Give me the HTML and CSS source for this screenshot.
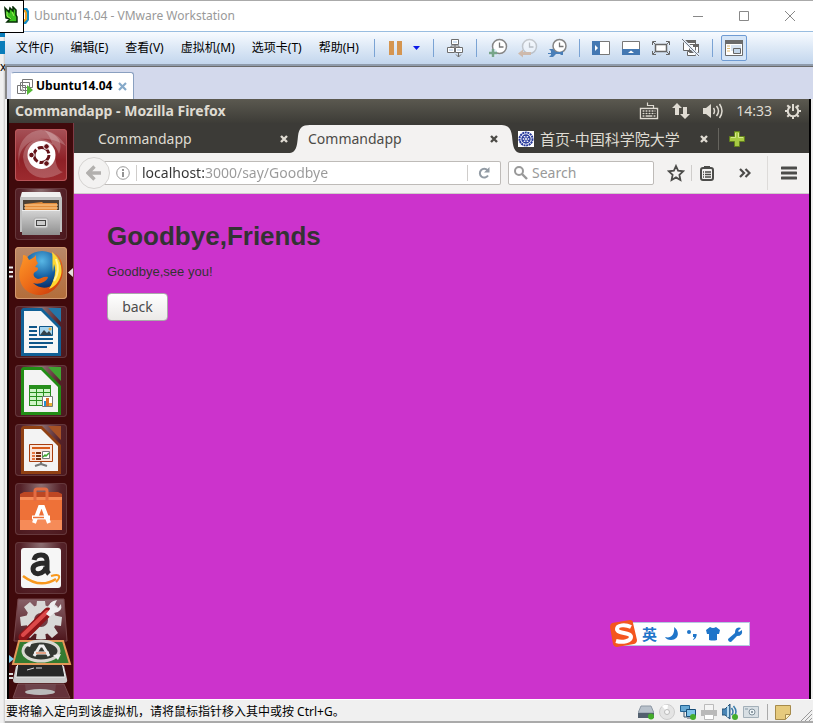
FILE: index.html
```html
<!DOCTYPE html>
<html lang="zh-CN">
<head>
<meta charset="utf-8">
<title>Ubuntu14.04 - VMware Workstation</title>
<link rel="stylesheet" href="styles.css">
</head>
<body>
<aside class="backdrop" aria-hidden="true">
  <div class="backdrop-blue"></div><div class="backdrop-blue tall"></div><span class="backdrop-mark">x</span>
</aside>
<div class="badge">
  <svg width="14" height="18" viewBox="0 0 14 18"><path d="M1 2l4 4 1-4 3 3V1l3 3v5l1 2v5H3l3-3-4-1z" fill="#39c21e" stroke="#062c06" stroke-width="1.500"/><path d="M3 6v4l4 3M8 6l2 4" stroke="#a4f35c" fill="none"/></svg>
</div>
<div class="window">
  <header class="titlebar">
    <svg class="app-icon" width="7" height="18" viewBox="0 0 7 18"><path d="M0 1h4l2 3v9l-3 4H0z" fill="#178cc0"/><path d="M0 4h2l1 2v6l-2 2H0z" fill="#fff" stroke="#f0a21d" stroke-width="2"/></svg>
    <span class="window-title">Ubuntu14.04 - VMware Workstation</span>
    <button class="caption" aria-label="最小化"><svg width="12" height="12"><path d="M1 6.500h10" stroke="#888"/></svg></button>
    <button class="caption" aria-label="最大化"><svg width="12" height="12"><path d="M1.500 1.500h9v9h-9z" fill="none" stroke="#888"/></svg></button>
    <button class="caption" aria-label="关闭"><svg width="12" height="12"><path d="M1 1l10 10M11 1L1 11" stroke="#888"/></svg></button>
  </header>

  <div class="menubar">
    <nav class="menus">
      <button>文件(F)</button><button>编辑(E)</button><button>查看(V)</button><button>虚拟机(M)</button><button>选项卡(T)</button><button>帮助(H)</button>
    </nav>
    <i class="sep"></i>
    <button class="pause" aria-label="挂起"><svg width="14" height="14"><path d="M0 0h5v14H0zM8 0h5v14H8z" fill="#d59550"/></svg></button>
    <button class="drop" aria-label="电源选项"><svg width="7" height="4"><path d="M0 0h7L3.500 4z" fill="#0a18e8"/></svg></button>
    <i class="sep"></i>
    <button class="tool narrow" aria-label="Ctrl+Alt+Del"><svg width="18" height="20" viewBox="0 0 18 20"><g fill="#fff" stroke="#6e6e6e"><path d="M5.500 1.500h7v5h-7zM1.500 9.500h7v5h-7zM9.500 9.500h7v5h-7zM9 6.500v3M5 9.500V8h8v1.500"/><path d="M12.500 15v4M10 16.500l2.500 2.500 2.500-2.500" fill="none"/></g><path d="M7 3.500h4v1H7zM3 11.500h4v1H3zM11 11.500h4v1h-4z" fill="#a9c8e8"/></svg></button>
    <i class="sep"></i>
    <div class="tools">
      <button class="tool" aria-label="拍摄快照"><svg width="20" height="20" viewBox="0 0 20 20"><circle cx="11.500" cy="8.500" r="7" fill="#fff" stroke="#858585" stroke-width="1.500"/><path d="M11.500 4.500v4.500h4" fill="none" stroke="#777" stroke-width="1.300"/><path d="M5 11v8M1 15h8" stroke="#dce9f7" stroke-width="5"/><path d="M5 11v8M1 15h8" stroke="#77a58a" stroke-width="2.500"/></svg></button>
      <button class="tool faded" aria-label="恢复快照"><svg width="20" height="20" viewBox="0 0 20 20"><circle cx="11.500" cy="8.500" r="7" fill="#fff" stroke="#999" stroke-width="1.500"/><path d="M11.500 4.500v4.500h4" fill="none" stroke="#888" stroke-width="1.300"/><path d="M0 15.500l5-4v2.500h8v3H5v2.500z" fill="#c98a58"/></svg></button>
      <button class="tool" aria-label="管理快照"><svg width="20" height="20" viewBox="0 0 20 20"><circle cx="11.500" cy="8" r="6.500" fill="#fff" stroke="#858585" stroke-width="1.500"/><path d="M11.500 4.500v4h4" fill="none" stroke="#777" stroke-width="1.300"/><path d="M1 11h4l3 3h5l2-1v4l-2 0-1-1H8l-3 3H1l2-2v-1H0v-1h3v-2z" fill="#4a7fb8"/></svg></button>
    </div>
    <i class="sep"></i>
    <div class="tools">
      <button class="tool" aria-label="显示库"><svg width="20" height="20" viewBox="0 0 20 20"><path d="M1.500 3.500h17v13h-17z" fill="#fff" stroke="#777"/><path d="M1 3h8v14H1z" fill="#4478b2"/><path d="M4 7l3 3-3 3z" fill="#fff"/></svg></button>
      <button class="tool" aria-label="显示缩略图"><svg width="20" height="20" viewBox="0 0 20 20"><path d="M1.500 3.500h17v13h-17z" fill="#fff" stroke="#777"/><path d="M1 11h18v6H1z" fill="#4478b2"/><path d="M7 15l3-2.500 3 2.500z" fill="#fff"/></svg></button>
      <button class="tool" aria-label="全屏"><svg width="20" height="20" viewBox="0 0 20 20"><path d="M4.500 6.500h11v7h-11z" fill="#fff" stroke="#666" stroke-width="1.500"/><path d="M1.500 7V3.500H5M15 3.500h3.500V7M18.500 13v3.500H15M5 16.500H1.500V13M2 4l2.500 2.500M18 4l-2.500 2.500M18 16l-2.500-2.500M2 16l2.500-2.500" fill="none" stroke="#666"/></svg></button>
      <button class="tool" aria-label="Unity"><svg width="20" height="20" viewBox="0 0 20 20"><g fill="#fff" stroke="#666"><path d="M8.500 6.500h9v8h-9zM2.500 2.500h12v10h-12zM6.500 13.500h8v4h-8z"/></g><path d="M2 2h13v3H2zM12 6h6v3h-6z" fill="#666"/><path d="M1 1l17 17" stroke="#e7effa" stroke-width="3"/><path d="M1 1l17 17" stroke="#707780"/></svg></button>
    </div>
    <i class="sep"></i>
    <button class="tool pressed" aria-label="控制台视图"><svg width="20" height="18" viewBox="0 0 20 18"><path d="M1.500 1.500h17v15h-17z" fill="#fff" stroke="#6b6b6b"/><path d="M1 1h18v4H1z" fill="#6b6b6b"/><path d="M3 7h3M3 9.500h3M3 12h3" stroke="#e2bc72"/><path d="M7 6h10v6H7z" fill="#d7e3f1"/><path d="M9.500 9.500h7v5h-7z" fill="#c3d6ea" stroke="#666"/></svg></button>
  </div>

  <div class="vm-tabs">
    <div class="vm-tab">
      <svg width="16" height="17" viewBox="0 0 16 17"><g fill="#fff" stroke="#777"><path d="M5.500 1.500h10v8h-10zM3.500 4.500h9v8h-9zM.5 7.500h8v8h-8z"/></g><path d="M4 11.500h3M5.500 10v4" stroke="#bbb"/><path d="M10 7l6 5-6 5z" fill="#55b736"/></svg>
      <span>Ubuntu14.04</span>
      <button aria-label="关闭选项卡"><svg width="9" height="9"><path d="M1 1l7 7M8 1L1 8" stroke="#86a9c9" stroke-width="2.200"/></svg></button>
    </div>
  </div>

  <main class="guest">
    <div class="panel">
      <strong>Commandapp - Mozilla Firefox</strong>
      <div class="indicators">
        <svg width="20" height="20" viewBox="0 0 20 20"><path d="M1.500 7.500h17v10h-17z" fill="#2f2e29" stroke="#dfdbd2" stroke-width="1.400"/><path d="M3.500 10h13M3.500 12.500h13" stroke="#dfdbd2" stroke-dasharray="2 1" stroke-width="1.500"/><path d="M3.500 15h2m1 0h7m1 0h2" stroke="#dfdbd2" stroke-width="1.500"/><path d="M14.500 7V4.500h-6V1.500" fill="none" stroke="#dfdbd2" stroke-width="1.200"/></svg>
        <svg width="18" height="18" viewBox="0 0 18 18"><path d="M5 1l5 5H7v7H3V6H0zM13 17l-5-5h3V5h4v7h3z" fill="#dfdbd2"/></svg>
        <svg width="20" height="16" viewBox="0 0 20 16"><path d="M0 5h3l5-4v14l-5-4H0z" fill="#dfdbd2"/><path d="M10.500 5q2 3 0 6M13.500 3q4 5 0 10M16.500 1q5 7 0 14" fill="none" stroke="#dfdbd2" stroke-width="1.500"/></svg>
        <time>14:33</time>
        <svg width="16" height="16" viewBox="0 0 16 16"><path d="M5.500 3.500a5.200 5.200 0 1 0 5 0" fill="none" stroke="#dfdbd2" stroke-width="2"/><path d="M8 1v7M0 8h3M13 8h3M2.300 2.300l2 2M13.700 2.300l-2 2M2.300 13.700l2-2M13.700 13.700l-2-2M8 13v3" stroke="#dfdbd2" stroke-width="2"/></svg>
      </div>
    </div>
    <div class="desktop">
      <nav class="launcher">
        <div class="tiles">
          <button class="tile dash" aria-label="Dash"><svg viewBox="0 0 52 52"><path d="M5 39C-1 15 25 0 51 17 45 7 37 2 26 1 10 2-1 18 5 39z" fill="#fff" opacity=".2"/><path d="M8 28C10 5 38 5 44 25 50 8 37 4 29 1 44 14 36 40 48 43 28 55 10 48 8 28z" fill="#fff" opacity=".22"/><circle cx="26.500" cy="26" r="14" fill="#fff"/><circle cx="26.500" cy="26" r="7.500" fill="none" stroke="#641217" stroke-width="3" stroke-dasharray="13.700 2"/><g fill="#641217" stroke="#fff"><circle cx="16.500" cy="26" r="2.800"/><circle cx="31.500" cy="17.500" r="2.800"/><circle cx="31.500" cy="34.500" r="2.800"/></g></svg></button>
          <button class="tile" aria-label="文件"><svg viewBox="0 0 52 52"><defs><linearGradient id="steel" x1="0" y1="0" x2="0" y2="1"><stop stop-color="#d4d4d4"/><stop offset="1" stop-color="#8f8f8f"/></linearGradient></defs><path d="M7 4h38l2 6v34H5V10z" fill="#c1c1c1"/><path d="M7 4h38l1 5H6z" fill="#f0f0f0"/><path d="M8 12h36v11H8z" fill="#4b4035"/><path d="M10 16l17-2 1 1h14v8H10z" fill="#e28c3b"/><path d="M9 17h34M9 20h34" stroke="#ffd198"/><path d="M7 22h38v25H7z" fill="url(#steel)"/><path d="M7 22.500h38" stroke="#eee"/><rect x="19" y="30" width="14" height="10" rx="2" fill="#ddd" stroke="#aaa"/><rect x="21.500" y="32.500" width="9" height="5" fill="#ccc" stroke="#444"/></svg></button>
          <button class="tile firefox" aria-label="Firefox"><svg viewBox="0 0 52 52"><defs><radialGradient id="globe" cx=".5" cy=".25" r=".7"><stop stop-color="#58b7e5"/><stop offset=".6" stop-color="#145c9f"/><stop offset="1" stop-color="#0a2a62"/></radialGradient><linearGradient id="fox" x1="0" y1="0" x2="1" y2="1"><stop stop-color="#ff9b29"/><stop offset=".5" stop-color="#ec6a18"/><stop offset="1" stop-color="#c43108"/></linearGradient></defs><circle cx="27" cy="24" r="20" fill="url(#globe)"/><path d="M8 8c3 0 5 2 6 5 4-2 6-3 7-5 0 4 0 6 2 8l-3 4c4 0 4 3 0 5-3 2-1 6 3 7 4 0 5-3 10-2-1 5-9 8-15 6 9 9 24 4 27-7 4-10-1-19-6-24 9 6 10 17 8 25-3 10-11 17-21 18C10 48 2 36 5 22c1-4 3-6 3-14z" fill="url(#fox)"/><path d="M37 5c8 6 12 17 8 26-2 5-6 9-11 11 5-8 8-17 5-25l-1 8c-1-8 0-14-1-20z" fill="#ffd72f"/><path d="M41 12c3 8 2 16-2 22" stroke="#fff29b" stroke-width="2" fill="none"/></svg></button>
          <button class="tile" aria-label="Writer"><svg viewBox="0 0 52 52"><path d="M8 2h19l19 19v29H6V4z" fill="#116096"/><path d="M9 5h17l17 17v25H9z" fill="#f6f6f6"/><path d="M33 2h13v14z" fill="#2476a8"/><path d="M14 21h8M14 25h8M14 29h8M14 33h24M14 37h24M14 41h18" stroke="#0f5689" stroke-width="2"/><path d="M24.500 20.500h13v9h-13z" fill="#a8d5ee" stroke="#0f5689"/><path d="M25 29l4-5 3 3 2-2 3 4z" fill="#34434b"/><circle cx="35" cy="23" r="1.500" fill="#eda93b"/></svg></button>
          <button class="tile" aria-label="Calc"><svg viewBox="0 0 52 52"><path d="M8 2h19l19 19v29H6V4z" fill="#228d15"/><path d="M9 5h17l17 17v25H9z" fill="#f3f3f3"/><path d="M33 2h13v14z" fill="#41a432"/><path d="M14 20h22v21H14z" fill="#278f1c"/><path d="M15 24h6v3h-6zm7 0h6v3h-6zm7 0h6v3h-6zM15 28h6v3h-6zm7 0h6v3h-6zm7 0h6v3h-6zM15 32h6v3h-6zm7 0h6v3h-6zM15 36h6v4h-6zm7 0h5v4h-5z" fill="#cef5c6"/><path d="M27.500 31.500h10v10h-10z" fill="#fff" stroke="#777"/><path d="M29 36h2v5h-2z" fill="#2391d3"/><path d="M31 33h3v8h-3z" fill="#d77024"/><path d="M34 38h3v3h-3z" fill="#e8b335"/></svg></button>
          <button class="tile" aria-label="Impress"><svg viewBox="0 0 52 52"><path d="M8 2h19l19 19v29H6V4z" fill="#904013"/><path d="M9 5h17l17 17v25H9z" fill="#f3f3f3"/><path d="M33 2h13v14z" fill="#a65226"/><path d="M14.500 20.500h23v17h-23z" fill="#fae5da" stroke="#a83d0d"/><path d="M17 24h18" stroke="#d65a1b" stroke-width="2"/><path d="M17 29h3M17 32h3M17 35h3" stroke="#e37540" stroke-width="2"/><path d="M21 29h5M21 32h5M21 35h5" stroke="#7b2e0e" stroke-width="2"/><path d="M27.500 27.500h7v7h-7z" fill="#fff" stroke="#777"/><path d="M28 33l2-2 1 1 3-3" stroke="#38a62c" stroke-width="1.500" fill="none"/><path d="M26 38v2l-6 2M26 40l6 2" stroke="#777" stroke-width="2" fill="none"/></svg></button>
          <button class="tile" aria-label="软件中心"><svg viewBox="0 0 52 52"><path d="M5 11h42v36H5z" fill="#ee7138"/><path d="M5 11l4-2h34l4 2v3H5z" fill="#bd4723"/><path d="M5 14h42v3H5zM5 37h42v10H5z" fill="#f68b58"/><path d="M20 18V8q0-2 2-2h8q2 0 2 2v10" fill="none" stroke="#e46c43" stroke-width="3"/><path d="M19 40l6-16h3l6 16" fill="none" stroke="#fff" stroke-width="4"/><path d="M17 34.500h18" stroke="#fff" stroke-width="4"/><path d="M18 34.500h11" stroke="#ee7138" stroke-width="1.500"/></svg></button>
          <button class="tile" aria-label="Amazon"><svg viewBox="0 0 52 52"><rect x="6" y="6" width="40" height="40" rx="3" fill="#f6f6f6"/><path d="M19 18q1-5 7-5 6 0 6 6v9q0 2 2 4M31 21c-9 0-13 2-13 6 0 7 11 6 13-2" fill="none" stroke="#292929" stroke-width="5"/><path d="M8 34q17 13 33 3" fill="none" stroke="#f8981d" stroke-width="2.500"/><path d="M36 34q7-2 8 0t-3 6" fill="none" stroke="#f8981d" stroke-width="2"/></svg></button>
        </div>
        <svg class="stack" width="64" height="105" viewBox="0 0 64 105"><defs><linearGradient id="shine" x1="0" y1="0" x2="0" y2="1"><stop stop-color="#886168"/><stop offset="1" stop-color="#4d151b"/></linearGradient></defs><path d="M9 5h46l3 42H5z" fill="url(#shine)" stroke="#754449"/><g fill="#d9d9d7"><circle cx="32" cy="26" r="15"/><path d="M28 7h8l1 8H27zM28 37h8l1 8H27zM11 23l9-2v10l-8 1zM53 23l-9-2v10l8 1zM15 13l6-5 7 7-7 7zM49 13l-6-5-7 7 7 7zM15 39l6 5 7-7-7-7zM49 39l-6 5-7-7 7-7z"/></g><circle cx="32" cy="26" r="7" fill="#713d43"/><path d="M14 43l25-25" stroke="#8f1418" stroke-width="9" stroke-linecap="round"/><path d="M14 41l24-23" stroke="#dc4949" stroke-width="4" stroke-linecap="round"/><path d="M37 20l4-5q-3-7 7-9l-3 6 4 2 3-4q2 8-7 9l-4 4z" fill="#eee"/><path d="M7 72l-3 14q0 3 3 3h48q4 0 3-4l-3-13z" fill="#c9c9c9"/><path d="M9 68l-2 15h49l-3-15z" fill="#272727" stroke="#eee"/><path d="M18 76l7-2M27 74h6" stroke="#ddd"/><path d="M9 90l-5 14h57l-6-14z" fill="#65323a" stroke="#7b4c50"/><path d="M16 90l1 9h29l1-9" fill="#755059" opacity=".6"/><ellipse cx="31" cy="98" rx="15" ry="3" fill="#bbb"/><path d="M10 47h44l7 23H4z" fill="#347b31" stroke="#e39858" stroke-width="2"/><ellipse cx="32" cy="57" rx="18" ry="10" fill="#343832" stroke="#d8d8d0" stroke-width="3"/><path d="M25 62l6-10h3l6 10" fill="none" stroke="#eee" stroke-width="3"/><path d="M25 59h15" stroke="#eee" stroke-width="3"/><path d="M27 59h10" stroke="#dc5b23"/><path d="M14 51l9-3-2 5zM44 61l8-1-3 6z" fill="#eee"/><path d="M0 61l5 4-5 4z" fill="#83ccec"/><path d="M0 80h4M0 84h4" stroke="#ddd" stroke-width="2"/></svg>
        <svg class="running" width="64" height="14" viewBox="0 0 64 14"><path d="M0 2.500h4M0 7h4M0 11.500h4" stroke="#eee" stroke-width="2"/><path d="M64 3v9l-5-4.500z" fill="#e5dedd"/></svg>
      </nav>

      <section class="browser">
        <div class="tabs">
          <div class="tab"><span>Commandapp</span><button aria-label="关闭"><svg width="8" height="8"><path d="M1 1l6 6M7 1L1 7" stroke="#dfdbd2" stroke-width="2.400"/></svg></button></div>
          <div class="tab active">
            <svg class="foot left" width="20" height="28" viewBox="0 0 20 28"><path d="M20 0C12 0 9 3 8 11 7 22 6 27 0 28h20z" fill="#f3f2f1"/></svg>
            <svg class="foot right" width="20" height="28" viewBox="0 0 20 28"><path d="M0 0C8 0 11 3 12 11 13 22 14 27 20 28H0z" fill="#f3f2f1"/></svg>
            <span>Commandapp</span><button aria-label="关闭"><svg width="8" height="8"><path d="M1 1l6 6M7 1L1 7" stroke="#4c4b47" stroke-width="2.400"/></svg></button></div>
          <div class="tab"><svg class="favicon" width="16" height="16" viewBox="0 0 16 16"><path d="M0 0h16v16H0z" fill="#fff"/><circle cx="8" cy="8" r="6.500" fill="none" stroke="#26389b" stroke-width="2" stroke-dasharray="2 .6"/><circle cx="8" cy="8" r="4" fill="none" stroke="#26389b" stroke-width="1.500"/><path d="M8 4v8M4.500 6l7 4M11.500 6l-7 4" stroke="#26389b" stroke-width="1.300"/><circle cx="8" cy="8" r="1" fill="#fff"/></svg><span class="cjk">首页-中国科学院大学</span><button aria-label="关闭"><svg width="8" height="8"><path d="M1 1l6 6M7 1L1 7" stroke="#dfdbd2" stroke-width="2.400"/></svg></button></div>
          <button class="new-tab" aria-label="新建标签页"><svg width="16" height="16" viewBox="0 0 16 16"><path d="M5.500 .5h5v5h5v5h-5v5h-5v-5h-5v-5h5z" fill="#a8ca43" stroke="#63811d"/><path d="M6.500 2v4.500H2M9.500 2v4.500H14" stroke="#d5e88c" fill="none"/></svg></button>
        </div>
        <div class="navbar">
          <button class="back-nav" aria-label="后退"><svg width="16" height="16" viewBox="0 0 16 16"><path d="M8.500 1.500L2 8l6.500 6.500M2.500 8H15" fill="none" stroke="#b2b0ae" stroke-width="3.400"/></svg></button>
          <div class="urlbar">
            <svg width="14" height="14" viewBox="0 0 14 14"><circle cx="7" cy="7" r="6.300" fill="none" stroke="#999"/><path d="M7 6v5M7 3v2" stroke="#888" stroke-width="1.800"/></svg>
            <i class="rule"></i>
            <input class="address" aria-label="地址" value="localhost:3000/say/Goodbye">
            <i class="rule"></i>
            <button aria-label="重新加载"><svg width="12" height="12" viewBox="0 0 12 12"><path d="M9.500 3.200A4.400 4.400 0 1 0 10 8.500" fill="none" stroke="#929ba4" stroke-width="2"/><path d="M11.500 0v5.500H6z" fill="#929ba4"/></svg></button>
          </div>
          <div class="searchbar">
            <svg width="14" height="14" viewBox="0 0 14 14"><circle cx="5" cy="5" r="4" fill="none" stroke="#999" stroke-width="2"/><path d="M8 8l5 5" stroke="#999" stroke-width="2.400"/></svg>
            <input aria-label="搜索" placeholder="Search">
          </div>
          <button class="nav-tool star" aria-label="收藏"><svg width="18" height="18" viewBox="0 0 18 18"><path d="M9 2l2.100 4.700 5.100.6-3.800 3.500 1 5.200L9 13.400 4.600 16l1-5.200L1.800 7.300l5.100-.6z" fill="none" stroke="#4c4c4a" stroke-width="1.800"/></svg></button>
          <i class="rule"></i>
          <button class="nav-tool" aria-label="书签"><svg width="16" height="16" viewBox="0 0 16 16"><rect x="2" y="3" width="12" height="12" rx="2" fill="none" stroke="#4c4c4a" stroke-width="2"/><path d="M5 1h6v3H5z" fill="#4c4c4a"/><path d="M4 7h1m1 0h6M4 9.500h1m1 0h6M4 12h1m1 0h6" stroke="#4c4c4a" stroke-width="1.400"/></svg></button>
          <button class="nav-tool more" aria-label="更多"><svg width="12" height="10" viewBox="0 0 12 10"><path d="M1 1l4 4-4 4M6.500 1l4 4-4 4" fill="none" stroke="#4c4c4a" stroke-width="2.200"/></svg></button>
          <i class="rule full"></i>
          <button class="nav-tool menu" aria-label="菜单"><svg width="16" height="14"><path d="M1 2h14M1 7h14M1 12h14" stroke="#4c4c4a" stroke-width="3" stroke-linecap="round"/></svg></button>
        </div>
        <article class="page">
          <h1>Goodbye,Friends</h1>
          <p>Goodbye,see you!</p>
          <button class="back">back</button>
          <div class="ime">
            <svg class="ime-logo" width="29" height="29" viewBox="0 0 29 29"><path d="M3 4L21 1q3 0 3 3l4 17q0 3-3 4L8 28q-3 0-4-3L1 8q0-3 2-4z" fill="#f4561f"/><path d="M22 8C16 5 8 6 8 10c0 5 14 3 14 8 0 4-8 6-15 4" fill="none" stroke="#fff" stroke-width="4"/></svg>
            <b>英</b>
            <svg width="14" height="14" viewBox="0 0 14 14"><path d="M9 0c6 4 5 13-3 13-3 0-5-1-6-3 7 2 10-4 9-10z" fill="#1f75c9"/></svg>
            <svg width="10" height="12" viewBox="0 0 10 12"><circle cx="2" cy="4" r="2" fill="#1f75c9"/><path d="M6 6h3.500q1 3-3 6l-.5-1q2-1 1-2H6z" fill="#1f75c9"/></svg>
            <svg width="14" height="14" viewBox="0 0 14 14"><path d="M4 0q3 2 6 0l4 3-1 4h-2v6q-4 1-8 0V7H1L0 3z" fill="#1f75c9"/></svg>
            <svg width="15" height="15" viewBox="0 0 15 15"><path d="M9 1q2-1 4 0l-3 3 1 1 3-2q1 6-5 6l-6 6q-3 0-3-3l7-6q0-4 2-5z" fill="#1f75c9"/></svg>
          </div>
        </article>
      </section>
    </div>
  </main>

  <footer class="status">
    <span>要将输入定向到该虚拟机，请将鼠标指针移入其中或按 Ctrl+G。</span>
    <div class="devices">
      <svg width="16" height="16" viewBox="0 0 16 16"><path d="M3 2h10l3 7H0z" fill="#b8c1cb" stroke="#8d98a4"/><path d="M0 9h16v5H0z" fill="#53606f"/><circle cx="13" cy="12.500" r="3" fill="#44ad2c"/></svg>
      <svg width="16" height="16" viewBox="0 0 16 16"><circle cx="8" cy="8" r="7.500" fill="#e4e4e4" stroke="#ccc"/><path d="M8 8L3 2q3-2 6-1z" fill="#fff"/><circle cx="8" cy="8" r="2.500" fill="#f7f7f7" stroke="#bbb"/></svg>
      <svg width="16" height="16" viewBox="0 0 16 16"><path d="M.5 1.500h9v6h-9z" fill="#67a9d4" stroke="#236292"/><path d="M4 8v5h3" fill="none" stroke="#3c576c"/><path d="M6.500 5.500h9v7h-9z" fill="#7fc3e9" stroke="#174c76"/><path d="M7 14h7" stroke="#456"/><circle cx="13" cy="13" r="3" fill="#44ad2c"/></svg>
      <svg width="16" height="16" viewBox="0 0 16 16"><path d="M3.500 .5h9v7h-9z" fill="#f5f5f5" stroke="#bbb"/><path d="M0 6h16v6H0z" fill="#b9b9b9"/><path d="M3.500 10.500h9v5h-9z" fill="#fff" stroke="#bbb"/></svg>
      <svg width="16" height="16" viewBox="0 0 16 16"><path d="M0 5h3l5-5v15l-5-4H0z" fill="#4a85b5" stroke="#2b5477"/><path d="M6 2v11" stroke="#b9dbf0" stroke-width="2"/><path d="M9.500 4q3 4 0 7M11.500 2q5 6 0 11" fill="none" stroke="#397bab" stroke-width="1.500"/><circle cx="13" cy="13" r="3" fill="#44ad2c"/></svg>
      <svg width="16" height="16" viewBox="0 0 16 16"><path d="M.5 2.500h15v11H.5z" fill="#d8dfe4" stroke="#a3afb8"/><circle cx="9" cy="8" r="3" fill="#edf3f6" stroke="#81909b"/><circle cx="9" cy="8" r="1" fill="#71818d"/><path d="M2 5h3" stroke="#8799a5"/></svg>
    </div>
    <i class="sep"></i>
    <svg class="note" width="16" height="15" viewBox="0 0 16 15"><path d="M.5 .5h15v9l-5 5H.5z" fill="#e6ca7d" stroke="#a68b4c"/><path d="M10.500 14v-4.500H15" fill="#fff2c4" stroke="#a68b4c"/></svg>
    <svg class="grip" width="11" height="12"><path d="M0 12L11 1M4 12l7-7M8 12l3-3" stroke="#999"/></svg>
  </footer>
</div>
</body>
</html>
```
FILE: styles.css
```css
* { box-sizing: border-box; }
body {
  margin: 0;
  min-height: 100vh;
  display: flex;
  position: relative;
  background: #eeeeee;
  font: 12px/16px "Noto Sans", "Noto Sans CJK SC", sans-serif;
  color: #000;
}
button {
  border: 0;
  padding: 0;
  background: none;
  font: inherit;
  color: inherit;
  display: flex;
  align-items: center;
  justify-content: center;
}
svg { display: block; flex: none; }
input { border: 0; padding: 0; margin: 0; min-width: 0; background: none; outline: 0; font: inherit; }

/* Sliver of the desktop to the left of the window */
.backdrop { width: 5px; padding-top: 33px; background: linear-gradient(90deg, #f0f0f0 3px, #c8c8c8); overflow: hidden; }
.backdrop-blue { height: 4px; margin-bottom: 4px; background: #0a7dba; }
.backdrop-blue.tall { height: 13px; margin-bottom: 5px; }
.backdrop-mark { display: block; }
.badge {
  position: absolute;
  left: 0;
  top: 0;
  z-index: 2;
  width: 24px;
  height: 33px;
  padding: 5px 4px;
  background: #fff;
  border: 1px solid #000;
  border-left: 0;
}

.window { flex: 1; min-width: 0; display: flex; flex-direction: column; border-bottom: 2px solid #aaa; }
.titlebar { height: 31px; display: flex; align-items: center; background: #fff; border-top: 1px solid #aaa; padding-left: 18px; }
.window-title { flex: 1; margin-left: 4px; color: #999; }
.caption { width: 46px; height: 29px; }

.menubar {
  height: 35px;
  display: flex;
  align-items: center;
  padding: 0 0 1px 11px;
  border-top: 1px solid #99bde0;
  border-bottom: 2px solid #8f9bab;
  background: linear-gradient(#f8fbff, #dce8f6 50%, #c3d6ed);
}
.menus { display: flex; gap: 17px; margin-right: 15px; }
.sep { width: 1px; height: 18px; background: #7aa3d4; flex: none; }
.pause { margin: 0 10px 0 14px; }
.drop { margin-right: 13px; }
.tool { width: 20px; height: 20px; }
.tool.narrow { width: 18px; margin: 0 12px; }
.tools { display: flex; gap: 10px; margin: 0 11px; }
.faded { opacity: .45; }
.tool.pressed { width: 26px; height: 26px; margin-left: 8px; border: 1px solid #6f9bd3; border-radius: 2px; background: #d5e5f7; }

.vm-tabs { height: 33px; padding: 5px 0 0 4px; border-left: 2px solid #888; border-top: 1px solid #6b6b6b; background: #d3d9ec; }
.vm-tab {
  width: 123px;
  height: 27px;
  display: flex;
  align-items: center;
  padding: 0 6px 0 5px;
  background: #fff;
  border: 1px solid #8aa0c0;
  border-bottom: 0;
  border-left-color: #fff;
  border-radius: 3px 3px 0 0;
  font: bold 12px/16px "Open Sans", sans-serif;
}
.vm-tab span { flex: 1; margin-left: 3px; }

.guest {
  flex: 1;
  display: flex;
  flex-direction: column;
  margin: 0 2px;
  border: solid #000;
  border-width: 0 2px;
  font-size: 14px;
  line-height: 20px;
}
.panel { height: 24px; display: flex; align-items: center; justify-content: space-between; padding: 0 8px 0 6px; color: #dfdbd2; background: linear-gradient(#5b5950, #3d3c37); }
.indicators { display: flex; align-items: center; gap: 13px; }
.desktop { flex: 1; display: flex; }

.launcher { position: relative; width: 65px; padding-top: 6px; background: #400a0c; border-right: 1px solid #803a44; }
.tiles { display: grid; gap: 7px; padding-left: 6px; }
.tile {
  width: 52px;
  height: 52px;
  border-radius: 4px;
  box-shadow: inset 0 0 0 1px #65383c;
  background: radial-gradient(ellipse at top, #8d7073, #552229 55%, #4b171c);
}
.tile svg { width: 52px; height: 52px; }
.tile.dash { background: linear-gradient(#a55157, #8e2026 60%, #9d2b2f); box-shadow: inset 0 0 0 1px #b95559; }
.tile.firefox { background: linear-gradient(#b98869, #b36d3a); box-shadow: inset 0 0 0 1px #d49970; }
.running { position: absolute; left: 0; top: 142px; }

.browser { flex: 1; min-width: 0; display: flex; flex-direction: column; }
.tabs { height: 30px; display: flex; align-items: stretch; padding: 2px 0 0 14px; background: #3c3b37; color: #dfdbd2; }
.tab { position: relative; width: 210px; padding: 0 10px; display: flex; align-items: center; }
.tab span { flex: 1; white-space: nowrap; }
.tab .cjk { font-size: 15px; }
.tab .favicon { margin-right: 6px; }
.tab.active { z-index: 1; color: #4c4b47; background: linear-gradient(#f3f2f1, #f3f2f1) 11px 0 / 192px 100% no-repeat; }
.foot { position: absolute; top: 0; }
.foot.left { left: -8px; }
.foot.right { right: -12px; }
.tab > span, .tab > button { position: relative; }
.new-tab { margin: 3px 0; padding-left: 10px; border-left: 1px solid #66645e; }

.navbar { height: 41px; display: flex; align-items: center; padding-left: 4px; background: #f3f2f1; border-bottom: 1px solid #d0cdca; color: #999; }
.back-nav { position: relative; width: 32px; height: 32px; flex: none; margin-right: -10px; border-radius: 50%; border: 1px solid #d5d3d1; background: #f3f2f1; }
.urlbar, .searchbar { height: 24px; display: flex; align-items: center; background: #fff; border: 1px solid #bebbb8; border-radius: 2px; }
.urlbar { flex: 1; min-width: 0; padding-left: 16px; border-left: 0; }
.urlbar button { width: 32px; }
.rule { width: 1px; height: 16px; flex: none; background: #cfcdcb; }
.urlbar .rule:first-of-type { margin: 0 5px 0 6px; }
.address { flex: 1; color: transparent; background: linear-gradient(90deg, #333 62px, #999 62px); -webkit-background-clip: text; background-clip: text; }
.searchbar { width: 146px; margin-left: 7px; padding: 0 5px; gap: 4px; }
.searchbar input { flex: 1; color: #333; }
.searchbar input::placeholder { color: #999; opacity: 1; }
.nav-tool { width: 30px; height: 30px; flex: none; }
.star { margin-left: 7px; }
.more { width: 45px; }
.rule.full { height: 34px; background: #dddbd9; }
.menu { width: 41px; }

.page { position: relative; flex: 1; padding: 26px 33px; background: #cc33cc; color: #333; font: 13px/18px "Liberation Sans", Arial, sans-serif; }
.page h1 { margin: 0; font-size: 26px; line-height: 32px; }
.page p { margin: 11px 0 12px; }
.back { width: 61px; height: 28px; border: 1px solid #aaa; border-radius: 4px; background: linear-gradient(#fff, #ebe9e7); color: #4c4c4c; font: 14px/20px "Noto Sans", sans-serif; }

.ime {
  position: absolute;
  right: 59px;
  bottom: 53px;
  width: 128px;
  height: 24px;
  display: flex;
  align-items: center;
  justify-content: space-between;
  padding: 0 6px 0 19px;
  background: #fff;
  border: 1px solid #b5c9df;
  color: #1f75c9;
}
.ime b { font: bold 15px/20px "Noto Sans CJK SC", sans-serif; }
.ime-logo { position: absolute; left: -14px; top: -4px; }

.status { height: 22px; display: flex; align-items: center; padding: 3px 1px 0 1px; background: #f0f0f0; border-top: 1px solid #fff; }
.status > span { flex: 1; white-space: nowrap; }
.devices { display: flex; gap: 5px; margin-right: 8px; }
.status .sep { background: #aaa; height: 16px; }
.note { margin: 0 10px 0 7px; }
.grip { align-self: flex-end; }
```
